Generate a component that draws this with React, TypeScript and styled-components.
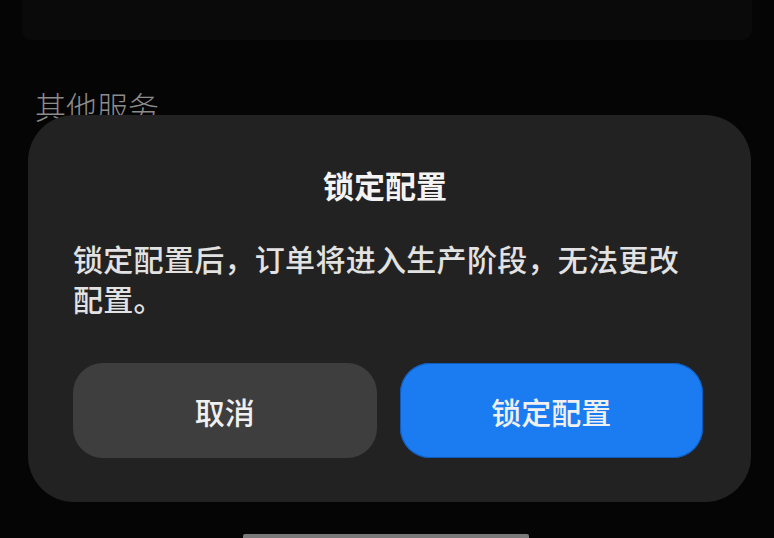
import React from 'react';
import styled, { createGlobalStyle } from 'styled-components';

const GlobalStyle = createGlobalStyle`
  html, body {
    margin: 0;
    padding: 0;
    background: #050505;
  }
  body {
    font-family: "Noto Sans CJK SC", "Noto Sans", sans-serif;
  }
`;

const Screen = styled.div`
  position: relative;
  width: 774px;
  height: 538px;
  overflow: hidden;
  background: #050505;
`;

const PrevCard = styled.div`
  height: 40px;
  margin: 0 22px;
  background: #0a0a0a;
  border-radius: 0 0 10px 10px;
`;

const SectionTitle = styled.div`
  margin-top: 46px;
  padding-left: 35px;
  font-size: 31px;
  line-height: 40px;
  font-weight: 300;
  color: #8c8c8c;
`;

const Dialog = styled.div`
  position: absolute;
  top: 115px;
  left: 28px;
  width: 723px;
  height: 387px;
  box-sizing: border-box;
  padding: 50px 48px 44px 45px;
  background: #222222;
  border-radius: 46px;
  display: flex;
  flex-direction: column;
`;

const Title = styled.div`
  text-align: center;
  font-size: 31px;
  line-height: 40px;
  font-weight: 700;
  color: #f4f4f4;
  padding-right: 6px;
`;

const Message = styled.div`
  margin-top: 33px;
  padding-right: 16px;
  font-size: 30px;
  line-height: 40px;
  font-weight: 500;
  letter-spacing: 0.3px;
  color: #e2e2e2;
`;

const Actions = styled.div`
  margin-top: auto;
  display: grid;
  grid-template-columns: 1fr 1fr;
  gap: 23px;
`;

const ActionButton = styled.button<{ primary?: boolean }>`
  height: 95px;
  border: none;
  border-radius: 30px;
  font-family: inherit;
  font-size: 30px;
  font-weight: 500;
  color: #f0f0f0;
  background: ${p => (p.primary ? '#1a7cf0' : '#3e3e3e')};
  box-shadow: ${p => (p.primary ? 'inset 0 0 0 1px #0f5bbd' : 'none')};
  padding: 0;
`;

const HomeBar = styled.div`
  position: absolute;
  left: 243px;
  bottom: 0;
  width: 286px;
  height: 4px;
  border-radius: 2px 2px 0 0;
  background: #7a7a7a;
`;

export default function App() {
  return (
    <>
      <GlobalStyle />
      <Screen>
        <PrevCard />
        <SectionTitle>其他服务</SectionTitle>
        <Dialog>
          <Title>锁定配置</Title>
          <Message>锁定配置后，订单将进入生产阶段，无法更改配置。</Message>
          <Actions>
            <ActionButton>取消</ActionButton>
            <ActionButton primary>锁定配置</ActionButton>
          </Actions>
        </Dialog>
        <HomeBar />
      </Screen>
    </>
  );
}
